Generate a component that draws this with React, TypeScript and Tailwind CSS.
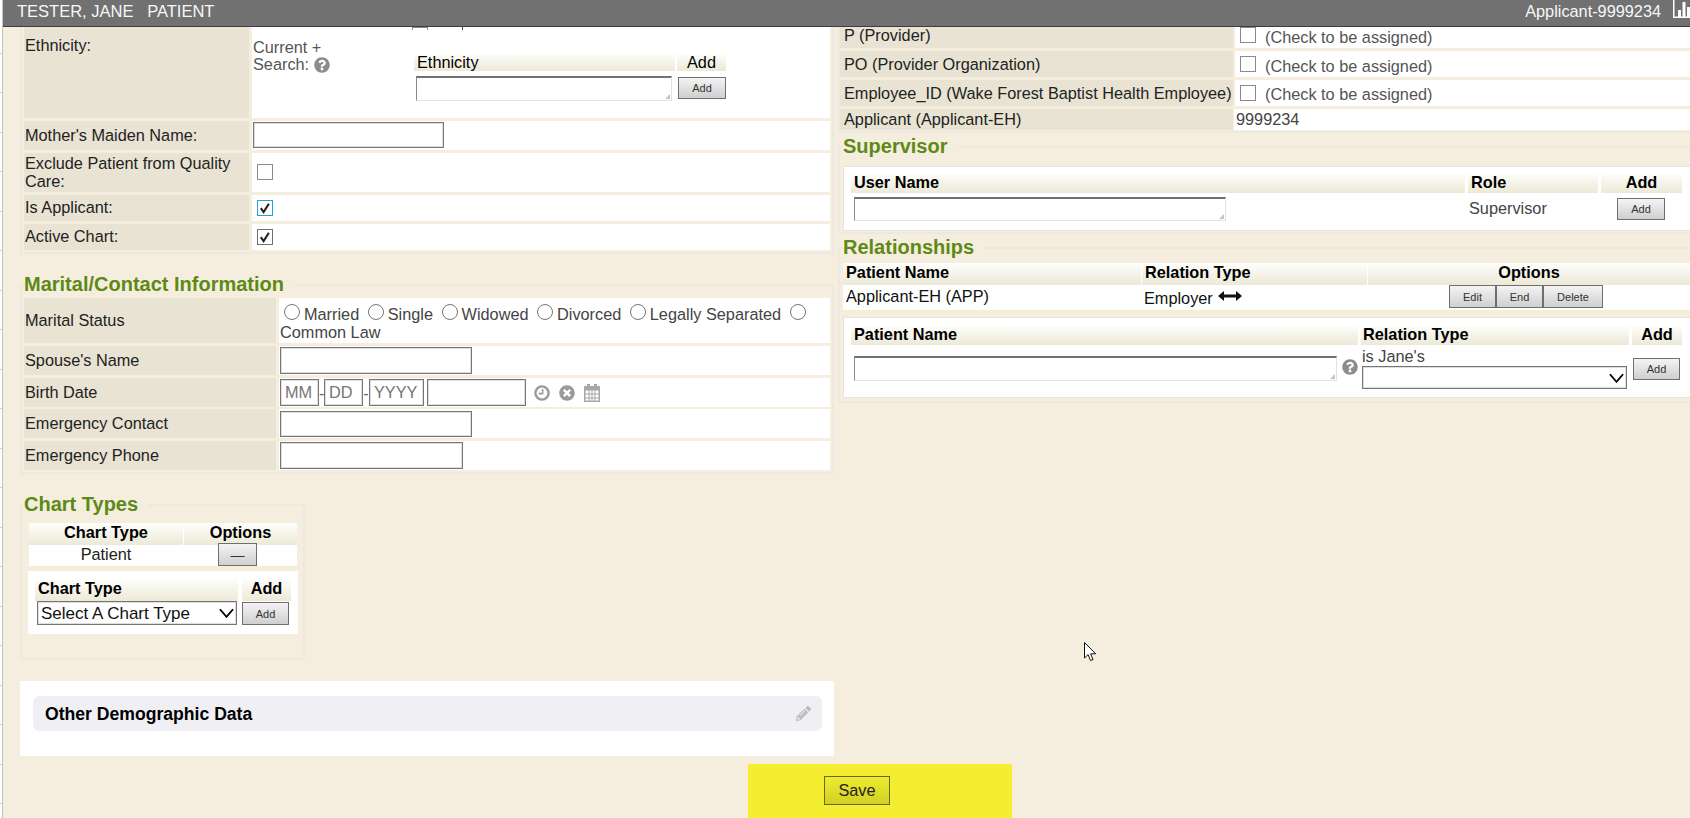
import type { ReactNode } from "react";
import { FaPencilAlt, FaQuestionCircle, FaTimesCircle } from "react-icons/fa";

const inputBox = "border border-[#767676] bg-white shadow-[inset_0_0_0_1px_#dedede] outline-none";
const thead = "flex items-center h-full bg-linear-to-b from-[#fefefc] to-[#ece9d6] text-black";

function Row({ height, labelW, label, children, labelClass = "items-center pl-px pb-[2px]", valueClass = "" }: { height: string; labelW: string; label: string; children?: ReactNode; labelClass?: string; valueClass?: string }) {
  return (
    <div className={`flex gap-[3px] ${height}`}>
      <div className={`flex shrink-0 bg-[#e8e3d3] text-[#222] ${labelW} ${labelClass}`}>
        <span>{label}</span>
      </div>
      <div className={`flex-1 min-w-0 bg-white text-[#444] ${valueClass}`}>{children}</div>
    </div>
  );
}

function Legend({ children, className = "pr-[10px]" }: { children: ReactNode; className?: string }) {
  return <legend className={`text-[20px] leading-[21px] font-bold text-[#5d8a17] ${className}`}>{children}</legend>;
}

function Btn({ children, className = "" }: { children: ReactNode; className?: string }) {
  return (
    <button className={`flex items-center justify-center shrink-0 border border-[#6f6f6f] bg-linear-to-b from-[#f4f4f4] to-[#cfcfcf] text-[11px] text-[#333] ${className}`}>
      {children}
    </button>
  );
}

function Check({ checked, blue }: { checked?: boolean; blue?: boolean }) {
  return (
    <span className={`flex h-4 w-4 items-center justify-center border bg-white ${blue ? "border-[#26a0da]" : checked ? "border-[#707070]" : "border-[#8a8a8a]"}`}>
      {checked && (
        <svg viewBox="0 0 16 16" className="h-4 w-4">
          <path d="M3.2 8.2 6.4 12.6 12.4 3.2" fill="none" stroke="#222" strokeWidth="2.4" />
        </svg>
      )}
    </span>
  );
}

function Radio({ label }: { label: string }) {
  return (
    <>
      <input type="radio" readOnly className="mx-1 h-4 w-4 appearance-none rounded-full border border-[#767676] bg-white" />
      {label}{" "}
    </>
  );
}

function Lookup({ className }: { className: string }) {
  return (
    <div className={`relative ${className}`}>
      <textarea readOnly className="block h-full w-full resize-none border border-t-2 border-[#e2e2e2] border-t-[#707070] border-l-[#8a8a8a] bg-white outline-none" />
      <svg viewBox="0 0 5 5" className="absolute bottom-[2px] right-[2px] h-[5px] w-[5px]" fill="#c4c4c4">
        <path d="M5 0v5H0z" />
      </svg>
    </div>
  );
}

function Pick({ className, children }: { className: string; children?: ReactNode }) {
  return (
    <div className={`relative ${className}`}>
      <select className={`h-full w-full appearance-none pl-[3px] pt-[2px] text-[17px] text-[#111] ${inputBox}`}>{children}</select>
      <svg viewBox="0 0 16 10" className="absolute right-[3px] top-1/2 h-[10px] w-[15px] -translate-y-1/2">
        <path d="M1 1 8 9 15 1" fill="none" stroke="#000" strokeWidth="2" />
      </svg>
    </div>
  );
}

function AssignRow({ height, label, labelClass, boxTop, textTop }: { height: string; label: string; labelClass: string; boxTop: string; textTop: string }) {
  return (
    <Row height={height} labelW="w-[393px]" label={label} labelClass={labelClass} valueClass="flex items-start pl-[5px] -ml-px">
      <span className={boxTop}><Check /></span>
      <span className={`ml-[9px] text-[#555] ${textTop}`}>(Check to be assigned)</span>
    </Row>
  );
}

export default function App() {
  return (
    <div className="relative flex h-[818px] w-[1690px] overflow-hidden bg-[#f5eede] font-['Liberation_Sans',Arial,sans-serif] text-[16.3px] leading-[18px]">
      {/* left gutter with the ruler ticks */}
      <div className="w-[3px] shrink-0 border-r border-[#c4c4c4] bg-white pt-[14px]">
        {Array.from({ length: 20 }).map((_, i) => (
          <div key={i} className="h-[39.5px] border-b border-[#d0d0d0]" />
        ))}
      </div>

      <div className="flex min-w-0 flex-1 flex-col">
        <header className="flex h-[27px] shrink-0 items-center border-b border-[#3d3d3d] bg-[#717171] pb-[5px] pl-[14px] text-[#f7f7f7]">
          <span className="whitespace-pre text-[16.5px]">TESTER, JANE   PATIENT</span>
          <span className="ml-auto">Applicant-9999234</span>
          <svg viewBox="0 0 18 20" className="ml-[12px] -mt-[5px] -mr-px h-5 w-[18px] shrink-0" fill="#fff">
            <path d="M0 0h1.5v18.5H18V20H0z" />
            <path d="M5 12h3v7H5zM9.5 4h3v15h-3zM14 9h3v10h-3z" />
          </svg>
        </header>

        <div className="flex h-[729px] shrink-0">
          {/* left column */}
          <div className="w-[835px] shrink-0 pl-[17px]">
            <div className="w-[814px]">
              <div className="flex flex-col gap-[3px] border-x-2 border-b-2 border-[#ece9e2] px-[2px] pb-[2px]">
                <Row height="h-[91px]" labelW="w-[225px]" label="Ethnicity:" labelClass="items-start pl-px pt-[9px]">
                  <div className="flex h-[3px] overflow-hidden">
                    <span className="ml-[160px] h-4 w-4 border border-[#8a8a8a]" />
                    <span className="ml-[34px] h-4 w-px bg-[#444]" />
                  </div>
                  <div className="flex items-start">
                    <div className="mt-[8px] w-[162px] pl-px text-[#555]">
                      <div className="h-[17px]">Current +</div>
                      <div className="flex items-center">
                        Search:
                        <FaQuestionCircle className="ml-[5px] mt-[2px] h-4 w-4 text-[#8c8c8c]" />
                      </div>
                    </div>
                    <div className="mt-[23px] w-[314px]">
                      <div className="grid h-[18px] grid-cols-[261px_49px] gap-x-[2px]">
                        <div className={`${thead} pl-[3px]`}>Ethnicity</div>
                        <div className={`${thead} justify-center`}>Add</div>
                      </div>
                      <div className="mt-[5px] flex items-start">
                        <Lookup className="ml-[2px] h-[25px] w-[256px]" />
                        <Btn className="ml-[6px] mt-px h-[22px] w-[48px]">Add</Btn>
                      </div>
                    </div>
                  </div>
                </Row>
                <Row height="h-[29px]" labelW="w-[225px]" label="Mother's Maiden Name:">
                  <input readOnly className={`ml-px mt-px block h-[26px] w-[191px] ${inputBox}`} />
                </Row>
                <Row height="h-[39px]" labelW="w-[225px]" label="Exclude Patient from Quality Care:" labelClass="items-center pl-px pb-px" valueClass="flex items-center pb-px pl-[5px]">
                  <Check />
                </Row>
                <Row height="h-[26px]" labelW="w-[225px]" label="Is Applicant:" valueClass="flex items-center pl-[5px]">
                  <Check checked blue />
                </Row>
                <Row height="h-[26px]" labelW="w-[225px]" label="Active Chart:" valueClass="flex items-center pl-[5px]">
                  <Check checked />
                </Row>
              </div>

              <fieldset className="mt-5 border-2 border-[#ece9e2] px-[2px] pb-[2px] pt-[3px]">
                <Legend>Marital/Contact Information</Legend>
                <div className="flex flex-col gap-[3px]">
                  <Row height="h-[45px]" labelW="w-[252px]" label="Marital Status" valueClass="pl-px pt-[6px]">
                    <Radio label="Married" />
                    <Radio label="Single" />
                    <Radio label="Widowed" />
                    <Radio label="Divorced" />
                    <Radio label="Legally Separated" />
                    <Radio label="Common Law" />
                  </Row>
                  <Row height="h-[29px]" labelW="w-[252px]" label="Spouse's Name" valueClass="pl-px pt-px">
                    <input readOnly className={`block h-[27px] w-[192px] ${inputBox}`} />
                  </Row>
                  <Row height="h-[29px] -mb-px" labelW="w-[252px]" label="Birth Date" valueClass="flex items-center pl-px text-[#666]">
                    <input readOnly placeholder="MM" className={`h-[27px] w-[39px] pl-1 ${inputBox} placeholder:text-[#757575]`} />
                    <span className="w-[5px] overflow-hidden text-center">-</span>
                    <input readOnly placeholder="DD" className={`h-[27px] w-[39px] pl-1 ${inputBox} placeholder:text-[#757575]`} />
                    <span className="w-[6px] overflow-hidden text-center">-</span>
                    <input readOnly placeholder="YYYY" className={`h-[27px] w-[55px] pl-1 ${inputBox} placeholder:text-[#757575]`} />
                    <input readOnly className={`ml-[3px] h-[27px] w-[99px] ${inputBox}`} />
                    <svg viewBox="0 0 16 16" className="ml-[8px] h-4 w-4">
                      <circle cx="8" cy="8" r="6.6" fill="none" stroke="#9a9a9a" strokeWidth="2.4" />
                      <path d="M8.6 4v4.6H4.6" fill="none" stroke="#9a9a9a" strokeWidth="1.6" />
                    </svg>
                    <FaTimesCircle className="ml-[9px] h-4 w-4 text-[#9a9a9a]" />
                    <svg viewBox="0 0 16 18" className="ml-[9px] h-[18px] w-4" fill="#a8a8a8">
                      <path d="M3 0h3v3.5H3zM10 0h3v3.5h-3z" />
                      <path fillRule="evenodd" d="M0 2h16v16H0zM1.5 6.5v3h3v-3zM5.5 6.5v3h2v-3zM8.500 6.500v3h2v-3zM11.500 6.500v3h3v-3zM1.500 10.500v3h3v-3zM5.500 10.500v3h2v-3zM8.500 10.500v3h2v-3zM11.500 10.500v3h3v-3zM1.500 14.500v2h3v-2zM5.500 14.500v2h2v-2zM8.500 14.500v2h2v-2zM11.500 14.500v2h3v-2z" />
                    </svg>
                  </Row>
                  <Row height="h-[29px]" labelW="w-[252px]" label="Emergency Contact" valueClass="pl-px pt-[2px]">
                    <input readOnly className={`block h-[26px] w-[192px] ${inputBox}`} />
                  </Row>
                  <Row height="h-[29px]" labelW="w-[252px]" label="Emergency Phone" valueClass="pl-px pt-px">
                    <input readOnly className={`block h-[27px] w-[183px] ${inputBox}`} />
                  </Row>
                </div>
              </fieldset>

              <fieldset className="mt-5 h-[166px] w-[285px] border-2 border-[#ece9e2] pl-[7px] pt-2">
                <Legend className="-ml-[5px] pr-[10px]">Chart Types</Legend>
                <div className="w-[268px]">
                  <div className="grid h-[19px] grid-cols-[154px_1fr] font-bold">
                    <div className={`${thead} justify-center pb-[4px]`}>Chart Type</div>
                    <div className={`${thead} justify-center border-l border-white pb-[4px]`}>Options</div>
                  </div>
                  <div className="grid h-[25px] grid-cols-[154px_1fr] border-b border-[#f3eecb] bg-white text-[#222]">
                    <div className="flex items-center justify-center">Patient</div>
                    <div className="flex items-start pl-[35px] pt-px">
                      <Btn className="h-[23px] w-[39px] text-[14px]">—</Btn>
                    </div>
                  </div>
                  <div className="-mx-px mt-1 h-[63px] w-[270px] bg-white px-[7px] pt-2">
                    <div className="grid h-[19px] grid-cols-[203px_49px] gap-x-1 font-bold">
                      <div className={`${thead} pl-[3px] pb-[4px]`}>Chart Type</div>
                      <div className={`${thead} justify-center pb-[4px]`}>Add</div>
                    </div>
                    <div className="mt-[3px] flex items-start">
                      <Pick className="ml-[2px] h-6 w-[200px]">
                        <option>Select A Chart Type</option>
                      </Pick>
                      <Btn className="ml-[5px] mt-px h-[23px] w-[47px]">Add</Btn>
                    </div>
                  </div>
                </div>
              </fieldset>

              <div className="mt-[21px] h-[75px] bg-white pl-[13px] pr-[12px] pt-[15px]">
                <div className="flex h-[35px] items-center justify-between rounded-md bg-[#f0eff4] pl-3 pr-[11px]">
                  <span className="text-[17.6px] leading-[16px] font-bold text-black">Other Demographic Data</span>
                  <FaPencilAlt className="h-[15px] w-[15px] text-[#bdbdbd]" />
                </div>
              </div>
            </div>
          </div>

          {/* right column */}
          <div className="min-w-0 flex-1">
            <div className="flex flex-col gap-[3px] border-b-2 border-l-2 border-[#ece9e2] pb-px">
              <AssignRow height="h-[21px]" label="P (Provider)" labelClass="items-start pl-[4px] leading-[16px]" boxTop="mt-0" textTop="mt-px" />
              <AssignRow height="h-[26px]" label="PO (Provider Organization)" labelClass="items-center pl-[4px]" boxTop="mt-[5px]" textTop="mt-[6px]" />
              <AssignRow height="h-[26px]" label="Employee_ID (Wake Forest Baptist Health Employee)" labelClass="items-center pl-[4px]" boxTop="mt-[5px]" textTop="mt-[5px]" />
              <Row height="h-[21px]" labelW="w-[393px]" label="Applicant (Applicant-EH)" labelClass="items-center pl-[4px] pb-[2px]" valueClass="flex items-center -ml-[2px] pl-[2px] pb-[2px]">
                <span className="text-[#444]">9999234</span>
              </Row>
            </div>

            <fieldset className="mt-[3px] border-2 border-r-0 border-[#ece9e2] pb-px pl-[3px] pt-[9px]">
              <Legend className="-mt-px pr-[11px]">Supervisor</Legend>
              <div className="h-[65px] border border-r-0 border-[#e8e4da] bg-white pl-[7px] pt-[6px]">
                <div className="grid h-[19px] grid-cols-[614px_130px_81px] gap-x-[3px] font-bold">
                  <div className={`${thead} pl-[3px] pb-[2px]`}>User Name</div>
                  <div className={`${thead} pl-[3px] pb-[2px]`}>Role</div>
                  <div className={`${thead} justify-center pb-[2px]`}>Add</div>
                </div>
                <div className="mt-[5px] grid grid-cols-[614px_130px_81px] gap-x-[3px]">
                  <Lookup className="ml-[3px] h-6 w-[372px]" />
                  <div className="flex h-6 items-center pb-[2px] pl-px text-[#444]">Supervisor</div>
                  <div className="pl-4 pt-px">
                    <Btn className="h-[22px] w-[48px]">Add</Btn>
                  </div>
                </div>
              </div>
            </fieldset>

            <fieldset className="mt-[3px] border-2 border-r-0 border-[#ece9e2] pb-[3px] pl-[3px] pt-[5px]">
              <Legend>Relationships</Legend>
              <div className="grid h-[19px] grid-cols-[298px_226px_1fr] font-bold">
                <div className={`${thead} pl-[3px] pb-[4px]`}>Patient Name</div>
                <div className={`${thead} pl-[3px] border-l border-white pb-[4px]`}>Relation Type</div>
                <div className={`${thead} justify-center border-l border-white pb-[4px]`}>Options</div>
              </div>
              <div className="grid h-[29px] grid-cols-[298px_226px_1fr] border-b border-[#f3eecb] bg-white text-[#111]">
                <div className="flex items-center pl-[3px]">Applicant-EH (APP)</div>
                <div className="flex items-center pl-[3px] pt-[3px]">
                  Employer
                  <svg viewBox="0 0 24 10" className="ml-[5px] -mt-[3px] h-[10px] w-6" fill="#111">
                    <path d="M0 5 6 0v3.5h12V0l6 5-6 5V6.500H6V10z" />
                  </svg>
                </div>
                <div className="flex items-start pl-[82px] pt-[3px]">
                  <Btn className="h-[23px] w-[47px]">Edit</Btn>
                  <Btn className="h-[23px] w-[47px]">End</Btn>
                  <Btn className="h-[23px] w-[60px]">Delete</Btn>
                </div>
              </div>
              <div className="mt-[6px] h-[81px] border border-r-0 border-[#e8e4da] bg-white pl-[7px] pt-[7px]">
                <div className="grid h-[18px] grid-cols-[507px_268px_50px] gap-x-[3px] font-bold">
                  <div className={`${thead} pl-[3px] pb-[2px]`}>Patient Name</div>
                  <div className={`${thead} pl-[2px] pb-[2px]`}>Relation Type</div>
                  <div className={`${thead} justify-center pb-[2px]`}>Add</div>
                </div>
                <div className="grid grid-cols-[507px_268px_50px] gap-x-[3px]">
                  <div className="flex items-start pl-[3px] pt-[13px]">
                    <Lookup className="h-[25px] w-[483px]" />
                    <FaQuestionCircle className="ml-[5px] mt-[3px] h-4 w-4 text-[#8c8c8c]" />
                  </div>
                  <div className="pl-px pt-[5px] text-[#444]">
                    <div className="h-[18px] leading-[17px]">is Jane's</div>
                    <Pick className="h-[23px] w-[265px]" />
                  </div>
                  <div className="pl-px pt-[15px]">
                    <Btn className="h-[22px] w-[47px]">Add</Btn>
                  </div>
                </div>
              </div>
            </fieldset>
          </div>
        </div>

        <div className="ml-[745px] mt-2 flex-1 w-[264px] bg-[#f5ee30] pl-[76px] pt-3">
          <button className="h-[29px] w-[66px] border border-[#68681e] bg-linear-to-b from-[#eeec2e] to-[#d2cf28] pb-[2px] text-[#222]">Save</button>
        </div>
      </div>

      {/* mouse pointer caught in the screenshot */}
      <svg viewBox="0 0 13 20" className="pointer-events-none absolute left-[1084px] top-[642px] h-5 w-[13px]">
        <path d="M.5.5v15.5l3.6-3.4 2.4 5.9 2.5-1-2.4-5.7h5.1z" fill="#fff" stroke="#111" strokeWidth="1" />
      </svg>
    </div>
  );
}
